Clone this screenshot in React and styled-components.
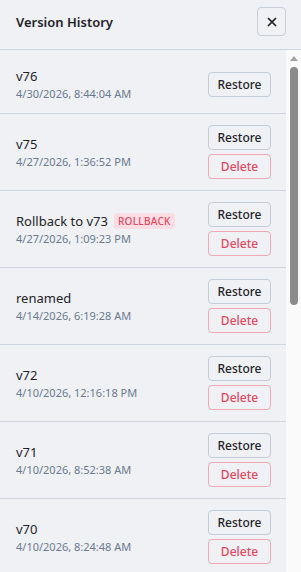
import React from 'react';
import styled, { createGlobalStyle } from 'styled-components';
import { X } from 'lucide-react';

const GlobalStyle = createGlobalStyle`
	html, body {
		margin: 0;
	}

	body {
		font-family: 'Noto Sans', 'Open Sans', sans-serif;
		background: #eff1f5;
	}
`;

const Panel = styled.aside`
	display: flex;
	flex-direction: column;

	box-sizing: border-box;
	height: 572px;
	width: 301px;
	overflow: hidden;

	background: #eff1f5;
	color: #1f2328;
`;

const Header = styled.header`
	display: flex;
	justify-content: space-between;
	align-items: center;
	flex-shrink: 0;

	padding: 7px 15px 13px 16px;

	border-bottom: 1px solid #cfd6df;
`;

const Title = styled.h2`
	margin: 0;

	font-weight: 600;
	font-size: 13px;
`;

const CloseButton = styled.button`
	display: inline-flex;
	justify-content: center;
	align-items: center;

	box-sizing: border-box;
	height: 29px;
	width: 29px;
	padding: 0;
	border-radius: 4px;

	border: 1px solid #c6cfda;
	background: transparent;
	color: #1f2328;
	cursor: pointer;
`;

const Body = styled.div`
	display: flex;
	flex: 1;
	min-height: 0;
`;

const List = styled.ul`
	flex: 1;
	min-width: 0;
	overflow-y: auto;
	scrollbar-width: none;

	margin: 0;
	padding: 5px 0 0;

	list-style: none;
`;

const ScrollTrack = styled.div`
	display: flex;
	flex-direction: column;
	align-items: center;
	flex-shrink: 0;

	width: 15px;

	background: #fafafa;
`;

const ScrollArrow = styled.span`
	width: 0;
	height: 0;
	margin: 6px 0 4px;

	border-left: 4px solid transparent;
	border-right: 4px solid transparent;
	border-bottom: 5px solid #a3a3a3;
`;

const ScrollThumb = styled.span`
	width: 8px;
	height: 238px;
	margin-top: 2px;
	border-radius: 4px;

	background: #8b8b8b;
`;

const Item = styled.li`
	display: flex;
	justify-content: space-between;
	align-items: center;

	padding: 11px 15px 11px 16px;

	border-bottom: 1px solid #cfd6df;
`;

const Info = styled.div`
	display: flex;
	flex-direction: column;
	min-width: 0;
`;

const Name = styled.div`
	display: flex;
	align-items: center;
	gap: 6px;

	line-height: 20px;
	font-size: 13px;
	color: #1f2328;
`;

const Badge = styled.span`
	display: inline-flex;
	align-items: center;

	height: 16px;
	padding: 0 4px;
	border-radius: 3px;

	background: #fbdde3;
	color: #e5485f;
	font-weight: 500;
	font-size: 10px;
	letter-spacing: 0.3px;
`;

const Date = styled.div`
	line-height: 16px;
	font-size: 11px;
	color: #6b7a8e;
`;

const Actions = styled.div`
	display: flex;
	flex-direction: column;
	gap: 4px;
`;

const ActionButton = styled.button`
	box-sizing: border-box;
	height: 25px;
	width: 63px;
	padding: 0;
	border-radius: 4px;

	border: 1px solid ${({ danger }) => (danger ? '#f1a8b5' : '#c3ccd7')};
	background: transparent;
	color: ${({ danger }) => (danger ? '#e5485f' : '#1f2328')};
	font-family: inherit;
	font-weight: 500;
	font-size: 12px;
	cursor: pointer;
`;

const versions = [
	{ name: 'v76', date: '4/30/2026, 8:44:04 AM', current: true },
	{ name: 'v75', date: '4/27/2026, 1:36:52 PM' },
	{ name: 'Rollback to v73', date: '4/27/2026, 1:09:23 PM', rollback: true },
	{ name: 'renamed', date: '4/14/2026, 6:19:28 AM' },
	{ name: 'v72', date: '4/10/2026, 12:16:18 PM' },
	{ name: 'v71', date: '4/10/2026, 8:52:38 AM' },
	{ name: 'v70', date: '4/10/2026, 8:24:48 AM' },
	{ name: 'v69', date: '4/9/2026, 5:41:12 PM' },
	{ name: 'v68', date: '4/9/2026, 3:02:55 PM' },
	{ name: 'v67', date: '4/8/2026, 11:18:07 AM' },
	{ name: 'v66', date: '4/7/2026, 4:33:40 PM' },
	{ name: 'v65', date: '4/6/2026, 9:12:21 AM' },
	{ name: 'v64', date: '4/3/2026, 2:47:09 PM' },
	{ name: 'v63', date: '4/2/2026, 10:05:33 AM' },
];

export default function App() {
	return (
		<>
			<GlobalStyle />
			<Panel>
				<Header>
					<Title>Version History</Title>
					<CloseButton aria-label="Close">
						<X size={14} strokeWidth={3} />
					</CloseButton>
				</Header>
				<Body>
					<List>
						{versions.map((v) => (
							<Item key={v.name}>
								<Info>
									<Name>
										{v.name}
										{v.rollback ? <Badge>ROLLBACK</Badge> : null}
									</Name>
									<Date>{v.date}</Date>
								</Info>
								<Actions>
									<ActionButton>Restore</ActionButton>
									{v.current ? null : (
										<ActionButton danger>Delete</ActionButton>
									)}
								</Actions>
							</Item>
						))}
					</List>
					<ScrollTrack aria-hidden="true">
						<ScrollArrow />
						<ScrollThumb />
					</ScrollTrack>
				</Body>
			</Panel>
		</>
	);
}
